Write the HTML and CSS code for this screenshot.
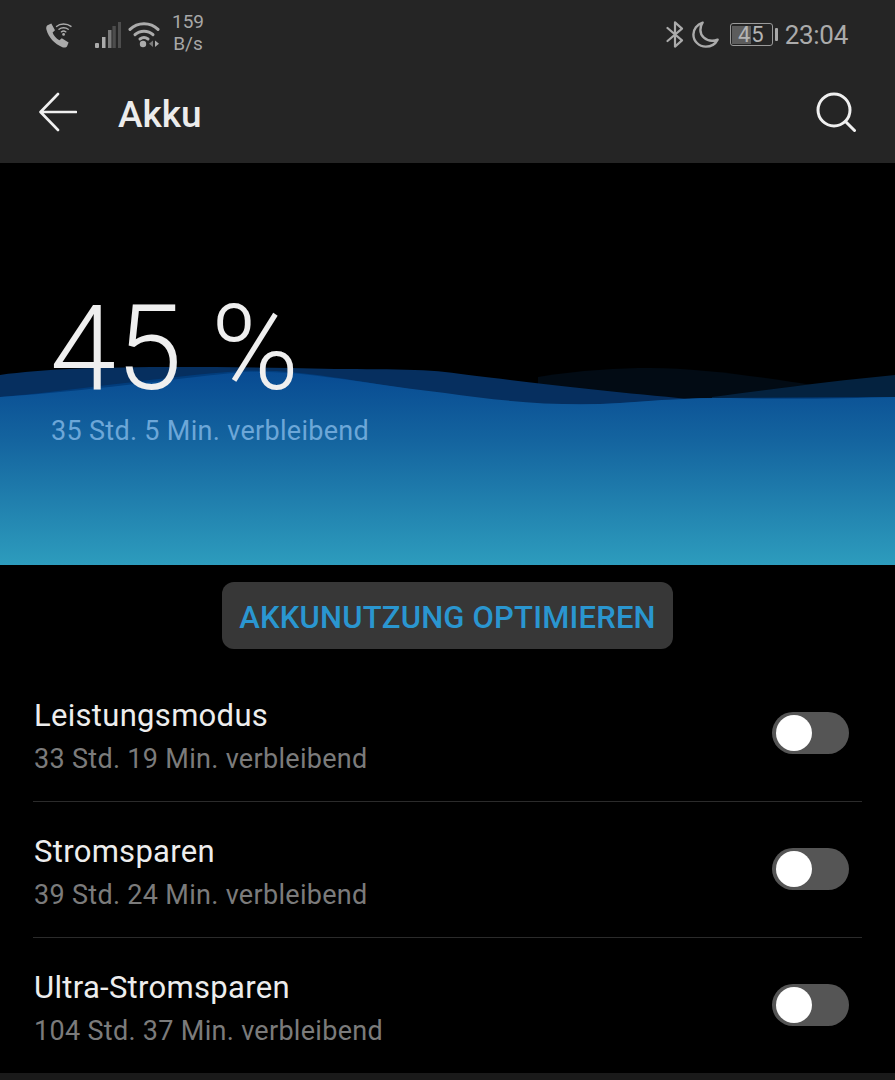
FILE: index.html
```html
<!DOCTYPE html>
<html lang="de">
<head>
<meta charset="utf-8">
<title>Akku</title>
<link rel="stylesheet" href="styles.css">
</head>
<body>
<div class="page">
  <header class="top">
    <div class="status">
      <div class="status-left">
        <svg class="i-call" width="28" height="28" viewBox="0 0 28 28">
          <path class="fill-grey" d="M2.5 3.2 6.3 1.6 10 8.2 7.6 10.4C8.6 13.4 11 16.2 14.4 18.2L16.8 16.2 23.6 20.6 22.2 24C21.4 25.6 19.4 26 17.4 25.2 9.6 22.2 3.6 15.6 1.4 7.6 1 5.8 1.2 4.2 2.5 3.2Z"/>
          <g class="stroke-grey" fill="none" stroke-width="1.4" stroke-linecap="round">
            <path d="M11.5 4.4C15 1.2 22 1.2 26 4.4"/>
            <path d="M14 7.2C16.6 5.2 20.6 5.2 23.2 7.2"/>
            <path d="M16.4 9.8C17.6 9 19.6 9 20.8 9.8"/>
          </g>
          <circle class="fill-grey" cx="18.6" cy="12.4" r="1.4"/>
        </svg>
        <svg class="i-signal" width="28" height="28" viewBox="0 0 28 28">
          <rect class="fill-grey" x="1" y="22" width="4" height="5" rx="1"/>
          <rect class="fill-grey" x="8" y="16" width="3.5" height="11"/>
          <rect class="fill-mid" x="14" y="9" width="3.5" height="18"/>
          <rect class="fill-dim" x="18.4" y="5" width="3.4" height="22"/>
          <rect class="fill-dim" x="24" y="1" width="3" height="26"/>
        </svg>
        <svg class="i-wifi" width="32" height="27" viewBox="0 0 32 27">
          <g class="stroke-grey" fill="none" stroke-width="3" stroke-linecap="round">
            <path d="M2 8.4C9.6 .8 22.4 .8 30 8.4"/>
            <path d="M7 13.6C11.8 9 20.2 9 25 13.6"/>
            <path d="M12 18C14.4 16.2 17.6 16.2 20 18"/>
          </g>
          <circle class="fill-grey" cx="15" cy="23" r="3.2"/>
          <path class="fill-mid" d="M25 19.6V26L21 22.8Z"/>
          <path class="fill-grey" d="M27 19.6V26L31 22.8Z"/>
        </svg>
        <div class="speed"><span>159</span><span>B/s</span></div>
      </div>
      <div class="status-right">
        <svg class="i-bt" width="18" height="27" viewBox="0 0 18 27">
          <path class="stroke-grey" fill="none" stroke-width="2.2" stroke-linejoin="round" stroke-linecap="round" d="M1.5 7 16 19.4 9 25.6V1.4L16 7.6 1.5 20"/>
        </svg>
        <svg class="i-moon" width="27" height="27" viewBox="0 0 27 27">
          <path class="stroke-grey" fill="none" stroke-width="2.4" stroke-linejoin="round" d="M10.6 1.6C5 3.4 1.4 8.2 1.4 13.4 1.4 20 6.8 25.6 13.8 25.6 19 25.6 23.4 23 25.6 18.6 24 19.4 22 19.8 20 19.8 13.8 19.8 8.4 15 8.4 9 8.4 6.2 9.2 3.6 10.6 1.6Z"/>
        </svg>
        <div class="battery">
          <div class="batt-body"><span class="batt-fill"></span><span class="batt-num">45</span></div>
          <span class="batt-cap"></span>
        </div>
        <span class="clock">23:04</span>
      </div>
    </div>
    <div class="toolbar">
      <svg class="i-back" width="38" height="40" viewBox="0 0 38 40">
        <path fill="none" stroke="#f0f0f0" stroke-width="2.6" stroke-linecap="round" stroke-linejoin="round" d="M37 20H2M19 2 1.5 20 19 38"/>
      </svg>
      <h1 class="title">Akku</h1>
      <svg class="i-search" width="40" height="40" viewBox="0 0 40 40">
        <circle cx="18" cy="18" r="16" fill="none" stroke="#f0f0f0" stroke-width="3"/>
        <path d="M29.5 29.5 38.5 38.5" fill="none" stroke="#f0f0f0" stroke-width="3" stroke-linecap="round"/>
      </svg>
    </div>
  </header>

  <section class="hero">
    <svg class="waves" viewBox="0 0 895 402" preserveAspectRatio="none">
      <defs>
        <linearGradient id="sea" gradientUnits="userSpaceOnUse" x1="0" y1="210" x2="0" y2="402">
          <stop offset="0" stop-color="#084b92"/>
          <stop offset=".35" stop-color="#14649f"/>
          <stop offset="1" stop-color="#2d9cbd"/>
        </linearGradient>
      </defs>
      <path fill="#020b14" d="M538 214C580 207 620 205 650 205 700 205 760 214 812 222L812 240H538Z"/>
      <path fill="#04223f" d="M712 234C760 228 830 218 895 212V240H712Z"/>
      <path fill="#062f5f" d="M0 212C60 204 140 203 290 205 350 207 410 205 445 209 500 216 600 228 690 236L712 238V245H0Z"/>
      <path fill="#023d7c" d="M0 234C70 228 160 214 240 208 300 205 360 220 450 232 500 240 560 244 620 240L700 235 895 234V260H0Z"/>
      <path fill="url(#sea)" d="M0 234C90 228 170 216 233 210 290 204 370 222 445 230 500 238 560 244 620 240 660 237 690 235 730 235 790 237 850 235 895 234V402H0Z"/>
    </svg>
    <div class="charge">45 %</div>
    <p class="remain">35 Std. 5 Min. verbleibend</p>
  </section>

  <div class="action">
    <button class="optimize" type="button">AKKUNUTZUNG OPTIMIEREN</button>
  </div>

  <ul class="modes">
    <li class="mode">
      <div class="mode-text"><span class="mode-name">Leistungsmodus</span><span class="mode-time">33 Std. 19 Min. verbleibend</span></div>
      <span class="switch"><span class="knob"></span></span>
    </li>
    <li class="mode">
      <div class="mode-text"><span class="mode-name">Stromsparen</span><span class="mode-time">39 Std. 24 Min. verbleibend</span></div>
      <span class="switch"><span class="knob"></span></span>
    </li>
    <li class="mode">
      <div class="mode-text"><span class="mode-name">Ultra-Stromsparen</span><span class="mode-time">104 Std. 37 Min. verbleibend</span></div>
      <span class="switch"><span class="knob"></span></span>
    </li>
  </ul>
  <div class="footer-strip"></div>
</div>
</body>
</html>
```
FILE: styles.css
```css
* { box-sizing: border-box; }
html, body { margin: 0; padding: 0; background: #000; }
.page {
  width: 895px;
  height: 1080px;
  overflow: hidden;
  display: flex;
  flex-direction: column;
  font-family: Roboto, "Liberation Sans", sans-serif;
  color: #f0f0f0;
  background: #000;
}
.fill-grey { fill: #ababab; }
.fill-mid { fill: #7a7a7a; }
.fill-dim { fill: #4d4d4d; }
.stroke-grey { stroke: #ababab; }

.top { height: 163px; background: #252525; flex: none; }
.status {
  height: 72px;
  padding: 0 47px 0 45px;
  display: flex;
  justify-content: space-between;
  align-items: center;
}
.status-left, .status-right { display: flex; align-items: center; }
.status-left { height: 60px; }
.i-call { margin-top: -1px; }
.i-signal { margin-left: 21px; margin-top: -2px; }
.i-wifi { margin-left: 6px; margin-top: -3px; }
.speed {
  margin-left: 12px;
  margin-top: -6px;
  display: flex;
  flex-direction: column;
  align-items: center;
  font-size: 19px;
  line-height: 22px;
  color: #a8a8a8;
}
.i-moon { margin-left: 8px; margin-top: -3px; }
.i-bt { margin-top: -3px; }
.battery { margin-left: 11px; display: flex; align-items: center; margin-top: -3px; }
.batt-body {
  position: relative;
  width: 43px;
  height: 23px;
  border: 1.5px solid #9a9a9a;
  border-radius: 3px;
  display: flex;
  align-items: center;
  justify-content: center;
}
.batt-fill {
  position: absolute;
  left: 1.5px;
  top: 1.5px;
  bottom: 1.5px;
  width: 19px;
  background: #5c5c5c;
}
.batt-num { position: relative; font-size: 22px; letter-spacing: 1px; line-height: 20px; color: #b4b4b4; }
.batt-cap { width: 3px; height: 13px; margin-left: 2px; background: #a8a8a8; border-radius: 1px; }
.clock {
  margin-left: 7px;
  margin-top: -3px;
  font-size: 26px;
  line-height: 30px;
  letter-spacing: -.3px;
  color: #ababab;
}
.toolbar {
  height: 91px;
  padding: 0 39px 13px 39px;
  display: flex;
  align-items: center;
}
.title { margin: 7px 0 0 41px; flex: 1; font-size: 37px; font-weight: 500; line-height: 42px; color: #ececec; }
.i-back { flex: none; margin-top: 2px; }
.i-search { flex: none; margin-top: 1px; }

.hero {
  position: relative;
  height: 402px;
  flex: none;
  padding: 118px 0 0 50px;
  background: #000;
}
.waves { position: absolute; left: 0; top: 0; width: 100%; height: 100%; display: block; }
.charge {
  position: relative;
  font-size: 119px;
  font-weight: 300;
  line-height: 135px;
  color: #efefef;
  white-space: pre;
}
.remain {
  position: relative;
  margin: 0 0 0 1px;
  font-size: 27px;
  letter-spacing: .3px;
  line-height: 30px;
  color: #6da7d8;
}

.action { height: 101px; flex: none; display: flex; justify-content: center; padding-top: 17px; }
.optimize {
  width: 451px;
  height: 67px;
  border: 0;
  border-radius: 12px;
  background: #373737;
  color: #2a96d0;
  font-family: inherit;
  font-size: 31px;
  letter-spacing: .2px;
  font-weight: 500;
  padding: 4px 0 0;
}
.modes { list-style: none; margin: 0; padding: 0 33px; flex: none; }
.mode {
  height: 136px;
  display: flex;
  align-items: center;
  justify-content: space-between;
  padding: 0 13px 2px 1px;
  border-bottom: 1px solid #2b2b2b;
}
.mode:last-child { height: 135px; border-bottom: 0; }
.mode-text { display: flex; flex-direction: column; gap: 6px; margin-top: 9px; }
.mode-name { font-size: 31px; letter-spacing: .3px; line-height: 38px; color: #ededed; }
.mode-time { font-size: 27px; letter-spacing: .3px; line-height: 36px; color: #7b7b7b; }
.switch {
  width: 77px;
  height: 42px;
  border-radius: 21px;
  background: #555;
  padding: 3px 4px;
  display: flex;
}
.knob { width: 36px; height: 36px; border-radius: 50%; background: #fff; }
.footer-strip { flex: 1; background: #1a1a1a; }
```
